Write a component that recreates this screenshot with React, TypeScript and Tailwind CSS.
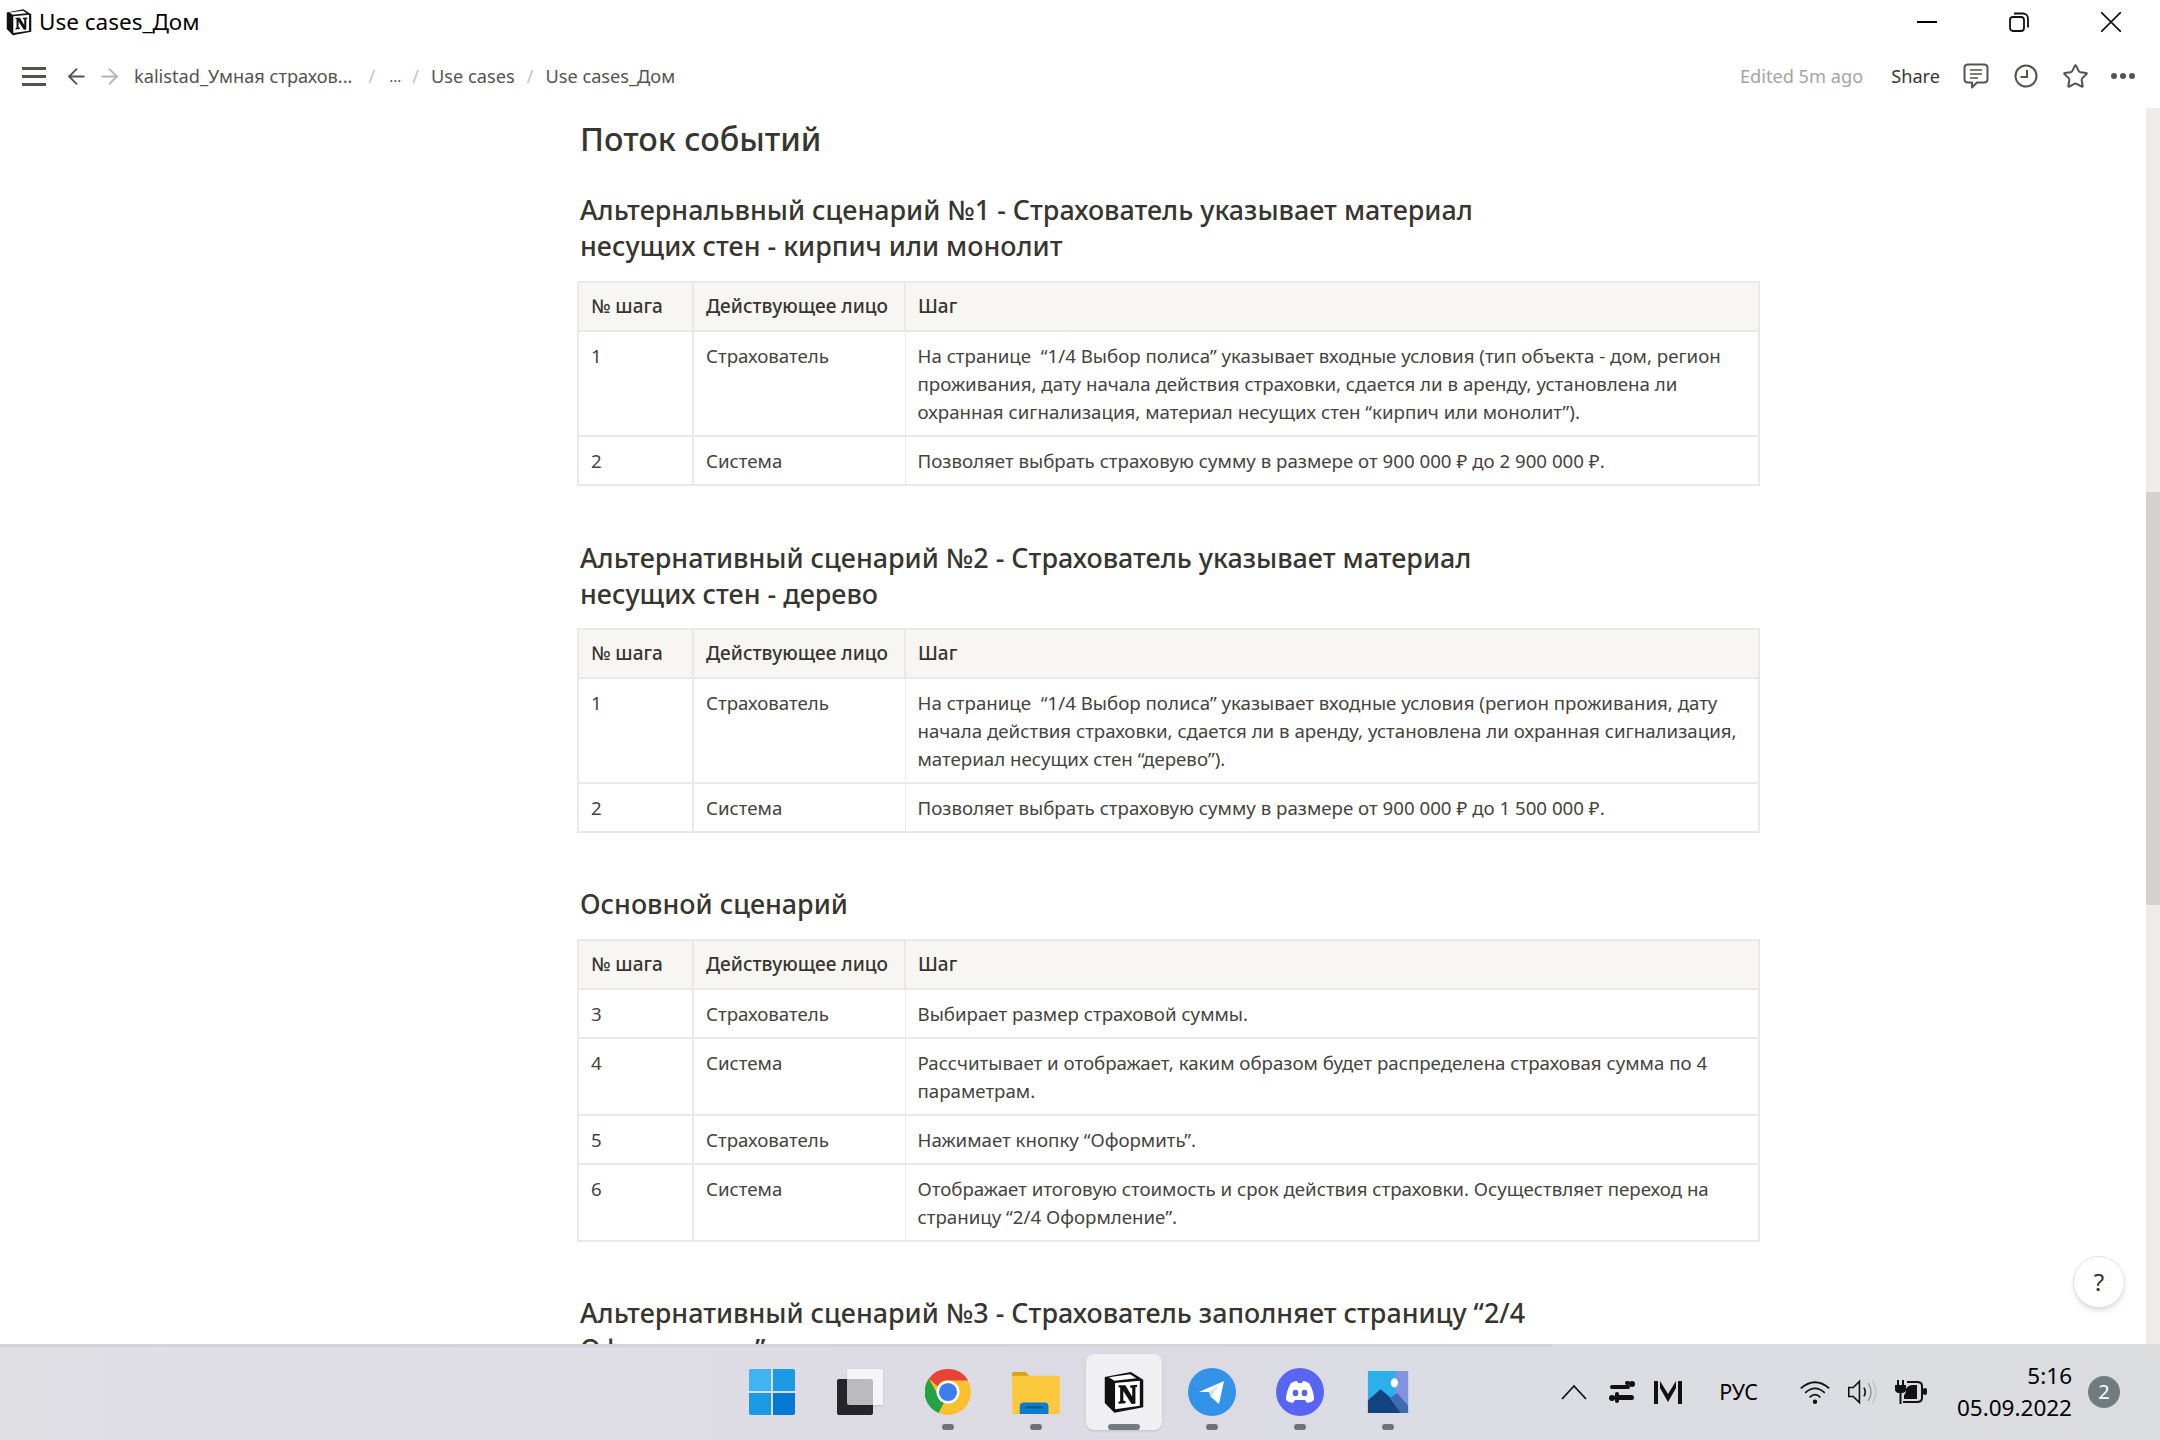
import { ArrowLeft, ArrowRight, Star } from "lucide-react";

type Row = { n: string; who: string; step: string[] };

const alt1: Row[] = [
  {
    n: "1",
    who: "Страхователь",
    step: [
      "На странице  “1/4 Выбор полиса” указывает входные условия (тип объекта - дом, регион",
      "проживания, дату начала действия страховки, сдается ли в аренду, установлена ли",
      "охранная сигнализация, материал несущих стен “кирпич или монолит”).",
    ],
  },
  { n: "2", who: "Система", step: ["Позволяет выбрать страховую сумму в размере от 900 000 ₽ до 2 900 000 ₽."] },
];

const alt2: Row[] = [
  {
    n: "1",
    who: "Страхователь",
    step: [
      "На странице  “1/4 Выбор полиса” указывает входные условия (регион проживания, дату",
      "начала действия страховки, сдается ли в аренду, установлена ли охранная сигнализация,",
      "материал несущих стен “дерево”).",
    ],
  },
  { n: "2", who: "Система", step: ["Позволяет выбрать страховую сумму в размере от 900 000 ₽ до 1 500 000 ₽."] },
];

const main: Row[] = [
  { n: "3", who: "Страхователь", step: ["Выбирает размер страховой суммы."] },
  {
    n: "4",
    who: "Система",
    step: ["Рассчитывает и отображает, каким образом будет распределена страховая сумма по 4", "параметрам."],
  },
  { n: "5", who: "Страхователь", step: ["Нажимает кнопку “Оформить”."] },
  {
    n: "6",
    who: "Система",
    step: ["Отображает итоговую стоимость и срок действия страховки. Осуществляет переход на", "страницу “2/4 Оформление”."],
  },
];

function NotionLogo({ size }: { size: number }) {
  return (
    <svg width={size} height={size} viewBox="0 0 32 32">
      <path d="M2 5 L21 1.500 L30 7 V27 L9 31 L2 24 Z" fill="#111" />
      <path d="M9.500 9.500 L27.500 7.800 V26 L9.500 28.500 Z" fill="#fff" />
      <path d="M5 5.200 L20.500 3 L25 6 L9 7.800 Z" fill="#fff" />
      <path d="M12 11 h5 l5 8.500 v-6.500 l-1.500 -.3 v-1.500 l5 -.4 v1.500 l-1.200 .3 v12 l-2.800 .2 l-6 -9.500 v7 l1.600 .3 v1.500 l-5.100 .4 v-1.500 l1.200 -.3 v-10 l-1.200 -.1 z" fill="#111" />
    </svg>
  );
}

function Table({ rows }: { rows: Row[] }) {
  return (
    <table className="ml-[-3px] w-[1183px] table-fixed border-collapse border-2 border-[#e9e9e7] text-[18.7px] text-[#45433e]">
      <colgroup>
        <col className="w-[115px]" />
        <col className="w-[212px]" />
        <col />
      </colgroup>
      <thead>
        <tr className="h-[49px] bg-[#f7f6f3] text-[19px] text-[#37352f]">
          <th className="border-2 border-[#e9e9e7] px-[12px] text-left font-medium">№ шага</th>
          <th className="border-2 border-[#e9e9e7] px-[12px] text-left font-medium">Действующее лицо</th>
          <th className="border-2 border-[#e9e9e7] px-[12px] text-left font-medium">Шаг</th>
        </tr>
      </thead>
      <tbody>
        {rows.map((r) => (
          <tr key={r.n} className="border-t-2 border-[#e9e9e7] align-top">
            <td className="border-r-2 border-[#e9e9e7] px-[12px] py-[9.5px] leading-[28px]">{r.n}</td>
            <td className="border-r border-[#e9e9e7] px-[12px] py-[9.5px] leading-[28px]">{r.who}</td>
            <td className="px-[12px] py-[9.5px] leading-[28px]">
              {r.step.map((line) => (
                <div key={line} className="whitespace-pre">
                  {line}
                </div>
              ))}
            </td>
          </tr>
        ))}
      </tbody>
    </table>
  );
}

function TitleBar() {
  return (
    <div className="flex h-[44px] shrink-0 items-center pl-[5px]">
      <NotionLogo size={28} />
      <span className="ml-[6px] text-[22.5px] text-black">Use cases_Дом</span>
      <div className="ml-auto flex items-center gap-[72px] pr-[39px]">
        <div className="h-[2px] w-[20px] bg-black" />
        <svg width="20" height="20" viewBox="0 0 20 20" fill="none" stroke="#111" strokeWidth="1.800">
          <rect x="1" y="5" width="14" height="14" rx="3" />
          <path d="M5 1.500 h9 a5 5 0 0 1 5 5 v9" />
        </svg>
        <svg width="20" height="20" viewBox="0 0 20 20" stroke="#111" strokeWidth="1.600">
          <path d="M0 0 L20 20 M20 0 L0 20" />
        </svg>
      </div>
    </div>
  );
}

function NavBar() {
  return (
    <div className="flex h-[64px] shrink-0 items-center pl-[22px] pt-[1px] text-[18.2px] text-[#55534e]">
      <div className="flex h-[19px] w-[24px] flex-col justify-between">
        <div className="h-[3px] bg-[#55534e]" />
        <div className="h-[3px] bg-[#55534e]" />
        <div className="h-[3px] bg-[#55534e]" />
      </div>
      <ArrowLeft size={25} strokeWidth={1.800} className="ml-[18px]" />
      <ArrowRight size={25} strokeWidth={1.800} className="ml-[8px] text-[#b5b4b1]" />
      <span className="ml-[12px]">kalistad_Умная страхов...</span>
      <span className="ml-[16px] text-[#c4c3c0]">/</span>
      <span className="ml-[14px] text-[15px]">...</span>
      <span className="ml-[11px] text-[#c4c3c0]">/</span>
      <span className="ml-[12px]">Use cases</span>
      <span className="ml-[12px] text-[#c4c3c0]">/</span>
      <span className="ml-[12px]">Use cases_Дом</span>
      <div className="ml-auto flex items-center pr-[25px]">
        <span className="text-[#a5a4a0]">Edited 5m ago</span>
        <span className="ml-[28px] text-[#37352f]">Share</span>
        <svg width="26" height="26" viewBox="0 0 26 26" fill="none" stroke="currentColor" strokeWidth="2" strokeLinejoin="round" className="ml-[23px]">
          <path d="M5 1.500 H21 Q24.500 1.500 24.500 5 V16 Q24.500 19.500 21 19.500 H14 L9 24.500 V19.500 H5 Q1.500 19.500 1.500 16 V5 Q1.500 1.500 5 1.500Z" />
          <path d="M7 7 H19 M7 11 H19 M7 15 H15" strokeWidth="1.600" />
        </svg>
        <svg width="24" height="24" viewBox="0 0 24 24" fill="none" stroke="currentColor" strokeWidth="2" className="ml-[25px]">
          <circle cx="12" cy="12" r="10.500" />
          <path d="M13 6 V13 H6.500" />
        </svg>
        <Star size={27} strokeWidth={1.800} className="ml-[24px]" />
        <div className="ml-[22px] flex gap-[3px]">
          <div className="size-[6px] rounded-full bg-[#55534e]" />
          <div className="size-[6px] rounded-full bg-[#55534e]" />
          <div className="size-[6px] rounded-full bg-[#55534e]" />
        </div>
      </div>
    </div>
  );
}

function Dock({ children, dot }: { children: React.ReactNode; dot?: boolean }) {
  return (
    <div className="relative flex h-[88px] w-[76px] items-center justify-center">
      {children}
      {dot ? <div className="absolute bottom-[6px] h-[6px] w-[12px] rounded-full bg-[#6f7175]" /> : null}
    </div>
  );
}

function Taskbar() {
  return (
    <div className="relative flex h-[96px] shrink-0 items-center bg-gradient-to-r from-[#e0dfe4] via-[#dcdbe5] to-[#dbdddf] text-black">
      <div className="absolute left-0 top-0 h-[3px] w-[1552px] bg-[#d4d4d8]" />
      <div className="ml-[734px] flex w-[760px] items-center gap-[12px]">
        <Dock>
          <div className="grid size-[46px] grid-cols-2 gap-[2px]">
            <div className="rounded-tl-[2px] bg-[#3fb4f0]" />
            <div className="rounded-tr-[2px] bg-[#1a9ae4]" />
            <div className="rounded-bl-[2px] bg-[#1a9ae4]" />
            <div className="rounded-br-[2px] bg-[#0478d2]" />
          </div>
        </Dock>
        <Dock>
          <div className="relative size-[46px]">
            <div className="absolute bottom-0 left-0 size-[36px] rounded-[2px] bg-[#26262a]" />
            <div className="absolute right-0 top-0 size-[36px] rounded-[2px] bg-[#ffffffb0] shadow-sm" />
          </div>
        </Dock>
        <Dock dot>
          <svg width="46" height="46" viewBox="0 0 48 48">
            <circle cx="24" cy="24" r="24" fill="#fbc02d" />
            <path d="M24 0 A24 24 0 0 1 45 12 H24 A12 12 0 0 0 13 18 L4 10 A24 24 0 0 1 24 0Z" fill="#e94335" />
            <path d="M4 10 L13 26 A12 12 0 0 0 20 35 L14 46 A24 24 0 0 1 4 10Z" fill="#27a046" />
            <circle cx="24" cy="24" r="12" fill="#fff" />
            <circle cx="24" cy="24" r="9.500" fill="#3b7fef" />
          </svg>
        </Dock>
        <Dock dot>
          <svg width="48" height="44" viewBox="0 0 50 46">
            <path d="M0 4 a2 2 0 0 1 2-2 h12 l5 5 h-19z" fill="#dda200" />
            <rect y="6" width="50" height="40" rx="2" fill="#fcc93e" />
            <path d="M8 46 V38 a4 4 0 0 1 4-4 h22 a4 4 0 0 1 4 4 v8z" fill="#0d7cc9" />
            <rect x="14" y="38" width="18" height="2" fill="#0a5a96" />
          </svg>
        </Dock>
        <div className="relative flex h-[76px] w-[76px] items-center justify-center rounded-[8px] bg-[#f0eff2] shadow-sm">
          <NotionLogo size={44} />
          <div className="absolute bottom-0 h-[6px] w-[32px] rounded-full bg-[#6f7c80]" />
        </div>
        <Dock dot>
          <div className="flex size-[48px] items-center justify-center rounded-full bg-[#3293e8]">
            <svg width="30" height="30" viewBox="0 0 30 30">
              <path d="M2 15 L27 4 L22 27 L14 20 L12 15 Z" fill="#fff" />
              <path d="M12 15 L14 20 L22 8 Z" fill="#cfe3f6" />
            </svg>
          </div>
        </Dock>
        <Dock dot>
          <div className="flex size-[48px] items-center justify-center rounded-full bg-[#5865f2]">
            <svg width="30" height="24" viewBox="0 0 30 24">
              <path d="M6 3 Q10 1 12 1 L13 3 H17 L18 1 Q20 1 24 3 Q29 11 29 20 Q26 23 22 23 L20 20 H10 L8 23 Q4 23 1 20 Q1 11 6 3Z" fill="#fff" />
              <ellipse cx="10.500" cy="13" rx="2.800" ry="3.200" fill="#5865f2" />
              <ellipse cx="19.500" cy="13" rx="2.800" ry="3.200" fill="#5865f2" />
            </svg>
          </div>
        </Dock>
        <Dock dot>
          <svg width="42" height="42" viewBox="0 0 44 46">
            <rect width="44" height="46" fill="#2cb0ea" />
            <path d="M30 0 H44 V46 H30Z" fill="#7f93e0" />
            <ellipse cx="29" cy="13" rx="4" ry="5" fill="#fff" />
            <path d="M0 32 L14 20 L44 46 H0Z" fill="#12437f" />
            <path d="M24 30 L32 24 L44 38 V46 H36Z" fill="#3f6cae" />
          </svg>
        </Dock>
      </div>
      <div className="ml-auto flex items-center pr-[40px]">
        <svg width="26" height="16" viewBox="0 0 26 16" fill="none" stroke="#111" strokeWidth="1.800">
          <path d="M1 15 L13 2 L25 15" />
        </svg>
        <svg width="26" height="24" viewBox="0 0 26 24" className="ml-[22px]" fill="#111">
          <rect x="1" y="5" width="20" height="4" rx="2" />
          <rect x="16" y="1" width="5" height="4" rx="2" />
          <circle cx="23" cy="4" r="3" />
          <rect x="5" y="15" width="20" height="5" rx="2.500" />
          <circle cx="3" cy="18" r="3" />
          <rect x="6" y="12" width="4" height="11" rx="2" />
        </svg>
        <svg width="28" height="24" viewBox="0 0 28 24" className="ml-[19px]" fill="#111">
          <path d="M0 1 H4 V24 H0Z M24 1 H28 V24 H24Z M6 1 L14 14 L22 1 V8 L14 22 L6 8Z" />
        </svg>
        <span className="ml-[37px] text-[21.5px]">РУС</span>
        <svg width="32" height="28" viewBox="0 0 36 30" fill="none" stroke="#111" strokeWidth="2" className="ml-[41px]">
          <path d="M2 11 Q18 -3 34 11 M7 16 Q18 6 29 16 M12 21 Q18 15 24 21" />
          <circle cx="18" cy="26" r="2.500" fill="#111" stroke="none" />
        </svg>
        <svg width="32" height="30" viewBox="0 0 36 32" fill="none" stroke="#111" strokeWidth="1.800" className="ml-[16px]">
          <path d="M2 11 H7 L14 4 V28 L7 21 H2Z" />
          <path d="M19 11 Q22 16 19 21" />
          <path d="M24 6 Q30 16 24 26" stroke="#9a9a9a" />
          <path d="M29 3 Q36 16 29 29" stroke="#c4c4c4" />
        </svg>
        <svg width="32" height="24" viewBox="0 0 32 24" className="ml-[16px]" fill="#111">
          <rect x="2" y="0" width="2" height="5" />
          <rect x="7" y="0" width="2" height="5" />
          <path d="M0 5 H11 V9 Q11 13 7 13 H6.500 V24 H4.500 V13 H4 Q0 13 0 9Z" />
          <path d="M12 2 H22 Q27 2 27 6 V18 Q27 22 22 22 H8" fill="none" stroke="#111" strokeWidth="2" />
          <path d="M11 9 Q13 5 18 5 H22 V19 H9 V15 Q11 14 11 9Z" />
          <rect x="28" y="8" width="4" height="7" rx="2" />
        </svg>
        <div className="ml-[30px] flex flex-col items-end text-[22.5px] leading-[32px]">
          <span>5:16</span>
          <span>05.09.2022</span>
        </div>
        <div className="ml-[16px] flex size-[32px] items-center justify-center rounded-full bg-[#6f7c80] text-[20px] text-white">2</div>
      </div>
    </div>
  );
}

export default function App() {
  return (
    <div className="flex h-[1440px] w-[2160px] flex-col overflow-hidden bg-white font-['Noto_Sans',sans-serif]">
      <TitleBar />
      <NavBar />
      <div className="relative flex min-h-0 flex-1">
        <main className="min-w-0 flex-1 overflow-hidden pl-[580px] text-[#37352f]">
          <h2 className="mt-[8px] text-[32.4px] font-medium leading-[44px]">Поток событий</h2>
          <h3 className="mt-[32px] w-[960px] text-[26.9px] font-medium leading-[36px]">
            Альтернальвный сценарий №1 - Страхователь указывает материал несущих стен - кирпич или монолит
          </h3>
          <div className="mt-[17px]">
            <Table rows={alt1} />
          </div>
          <h3 className="mt-[54px] w-[960px] text-[26.9px] font-medium leading-[36px]">
            Альтернативный сценарий №2 - Страхователь указывает материал несущих стен - дерево
          </h3>
          <div className="mt-[16px]">
            <Table rows={alt2} />
          </div>
          <h3 className="mt-[53px] text-[26.9px] font-medium leading-[36px]">Основной сценарий</h3>
          <div className="mt-[17px]">
            <Table rows={main} />
          </div>
          <h3 className="mt-[53px] w-[1000px] text-[26.9px] font-medium leading-[36px]">
            Альтернативный сценарий №3 - Страхователь заполняет страницу “2/4 Оформление”
          </h3>
        </main>
        <div className="w-[14px] shrink-0 bg-[#edece9] pt-[384px]">
          <div className="h-[413px] bg-[#d3d2cc]" />
        </div>
        <button className="absolute bottom-[36px] right-[35px] flex size-[52px] items-center justify-center rounded-full border border-[#e3e3e1] bg-white text-[24px] text-[#37352f] shadow-md">
          ?
        </button>
      </div>
      <Taskbar />
    </div>
  );
}
